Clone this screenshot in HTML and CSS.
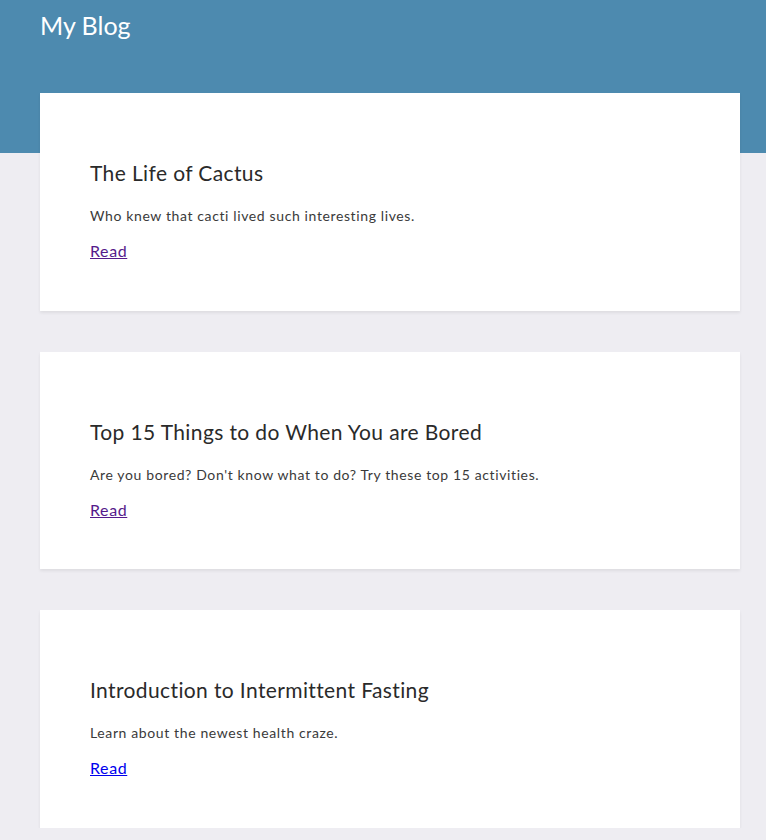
FILE: index.html
```html
<!DOCTYPE html>
<html lang="en">
<head>
<meta charset="utf-8">
<title>My Blog</title>
<link rel="stylesheet" href="styles.css">
</head>
<body>
<header class="site-header">
  <h1 class="site-title">My Blog</h1>
</header>
<main class="posts">
  <article class="post-card">
    <h2 class="post-title">The Life of Cactus</h2>
    <p class="post-summary">Who knew that cacti lived such interesting lives.</p>
    <a class="post-link visited" href="#">Read</a>
  </article>
  <article class="post-card">
    <h2 class="post-title">Top 15 Things to do When You are Bored</h2>
    <p class="post-summary">Are you bored? Don't know what to do? Try these top 15 activities.</p>
    <a class="post-link visited" href="#">Read</a>
  </article>
  <article class="post-card">
    <h2 class="post-title">Introduction to Intermittent Fasting</h2>
    <p class="post-summary">Learn about the newest health craze.</p>
    <a class="post-link" href="#">Read</a>
  </article>
</main>
</body>
</html>
```
FILE: styles.css
```css
html, body {
  margin: 0;
  padding: 0;
}
body {
  background: #eeedf2;
  font-family: "Lato", "Open Sans", sans-serif;
  color: #333;
}
.site-header {
  background: #4d8aaf;
  height: 153px;
  box-sizing: border-box;
  padding: 10px 40px;
}
.site-title {
  margin: 0;
  font-size: 25px;
  line-height: 30px;
  font-weight: 400;
  color: #fff;
}
.posts {
  margin-top: -60px;
  padding: 0 26px 0 40px;
  display: flex;
  flex-direction: column;
  gap: 41px;
}
.post-card {
  background: #fff;
  width: 700px;
  box-sizing: border-box;
  padding: 50px 50px 49.6px;
  box-shadow: 0 2px 3px rgba(0, 0, 0, 0.07);
  display: flex;
  flex-direction: column;
  align-items: flex-start;
}
.post-title {
  margin: 18px 0 0;
  font-size: 21px;
  line-height: 24px;
  font-weight: 400;
  letter-spacing: 0.38px;
  color: #2a2a2a;
}
.post-summary {
  margin: 21px 0 0;
  font-size: 14px;
  line-height: 20px;
  letter-spacing: 0.62px;
  color: #3a3a3a;
}
.post-link {
  margin-top: 15px;
  font-size: 16px;
  line-height: 20px;
  letter-spacing: 0.6px;
  color: #0000ee;
}
.post-link.visited {
  color: #551a8b;
}
```
